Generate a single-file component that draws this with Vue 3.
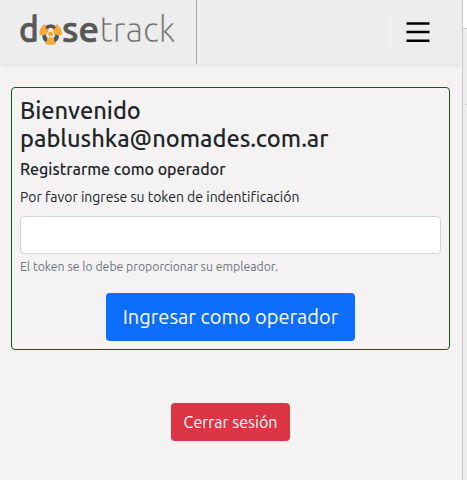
<script setup>
import { ref } from 'vue'

const token = ref('')
</script>

<template>
  <div class="screen">
    <div class="page">
      <header class="topbar">
        <div class="brand">
          <svg class="logo" width="176" height="64" viewBox="0 0 176 64" aria-label="dosetrack">
            <text class="logo-bold" x="-0.9" y="42.400" textLength="19.800" lengthAdjust="spacingAndGlyphs">d</text>
            <g transform="translate(30.600 33.600)">
              <ellipse rx="6.500" ry="7.600" fill="none" stroke="#575756" stroke-width="3.600" />
              <g fill="#f4a938">
                <path d="M-3.500 1-10.900 2A11 11 0 0 1-5.800-9.500L-1.500-3.500Z" />
                <path d="M3.500 1 10.900 2A11 11 0 0 0 5.800-9.500L1.500-3.500Z" />
                <path d="M-2.500 3-5.500 9.800A11.300 11.300 0 0 0 5.500 9.800L2.500 3Z" />
              </g>
              <path d="M-4.500-5.500Q0-8.500 4.500-5.500M-7.300 2.500Q-6.500 6-4 7.500M7.300 2.500Q6.500 6 4 7.500" fill="none" stroke="#575756" stroke-width="2.800" />
              <path d="M-1.500-5.500H1.500L2-3 4.300 1.500 3 4H-3L-4.300 1.500-2-3Z" fill="#eee" />
              <circle cy="0.300" r="2.500" fill="#f4a938" />
            </g>
            <text class="logo-bold" x="42" y="42.400" textLength="37" lengthAdjust="spacingAndGlyphs">se</text>
            <text class="logo-light" x="79.500" y="42.400" textLength="76" lengthAdjust="spacingAndGlyphs">track</text>
          </svg>
        </div>
        <button class="toggler" type="button" aria-label="Menú">
          <svg width="24" height="22" viewBox="0 0 24 22">
            <path d="M.5 2.500h23M.5 11.100h23M.5 19.700h23" stroke="#000" stroke-width="2.500" />
          </svg>
        </button>
      </header>
      <main>
        <form class="card" @submit.prevent>
          <h3>Bienvenido<br />pablushka@nomades.com.ar</h3>
          <h6>Registrarme como operador</h6>
          <label for="token">Por favor ingrese su token de indentificación</label>
          <input id="token" v-model="token" type="text" />
          <small>El token se lo debe proporcionar su empleador.</small>
          <button class="btn primary" type="submit">Ingresar como operador</button>
        </form>
        <button class="btn danger" type="button">Cerrar sesión</button>
      </main>
    </div>
    <aside class="edge">
      <div class="edge-top"></div>
      <div class="edge-mid"></div>
    </aside>
  </div>
</template>

<style>
body {
  background: #f4f2f3;
  overflow: hidden;
}
</style>

<style scoped>
* {
  box-sizing: border-box;
}
.screen {
  display: flex;
  height: 480px;
  font-family: Ubuntu, "Noto Sans", sans-serif;
  font-variant-ligatures: none;
  color: #212529;
}
.page {
  width: 462px;
  background: #f4f2f3;
}
.topbar {
  display: flex;
  justify-content: space-between;
  align-items: center;
  height: 64px;
  padding-right: 16px;
  background: #ededed;
  box-shadow: 0 2px 4px rgba(0, 0, 0, 0.07);
}
.brand {
  width: 197px;
  height: 64px;
  padding-left: 20px;
  border-right: 1px solid #aaa;
}
.logo {
  display: block;
}
.logo-bold {
  font: 500 35px Ubuntu, "Noto Sans", sans-serif;
  fill: #575756;
  stroke: #575756;
  stroke-width: 0.7px;
}
.logo-light {
  font: 300 35px Ubuntu, "Open Sans", sans-serif;
  fill: #686867;
  stroke: #ededed;
  stroke-width: 0.4px;
}
.toggler {
  display: flex;
  justify-content: center;
  align-items: center;
  width: 56px;
  height: 40px;
  padding: 0;
  border: 1px solid #efefef;
  border-radius: 4px;
  background: transparent;
}
main {
  display: flex;
  flex-direction: column;
  align-items: center;
  padding: 23px 12px 0 11px;
}
.card {
  display: flex;
  flex-direction: column;
  width: 439px;
  height: 263px;
  padding: 8px;
  border: 1px solid #0f5526;
  border-radius: 4px;
}
h3 {
  height: 56px;
  margin: 0 0 8px;
  font-size: 23.600px;
  font-weight: 500;
  line-height: 28.300px;
}
h6 {
  margin: 0 0 8px;
  font-size: 16px;
  font-weight: 500;
  line-height: 19px;
}
label {
  height: 21px;
  margin-bottom: 8px;
  font-size: 14px;
  line-height: 21px;
}
h3,
h6,
label,
small,
.btn {
  white-space: nowrap;
}
input {
  height: 38px;
  width: 421px;
  margin: 0;
  padding: 6px 12px;
  border: 1px solid #ced4da;
  border-radius: 4px;
  background: #fff;
  font: inherit;
}
small {
  height: 19px;
  margin-top: 4px;
  color: #6c757d;
  font-size: 12.250px;
  line-height: 18px;
}
.btn {
  padding: 0;
  border: 0;
  border-radius: 4px;
  color: #fff;
  font-family: inherit;
}
.primary {
  align-self: center;
  width: 249px;
  height: 48px;
  margin-top: 16px;
  padding-bottom: 2px;
  background: #0d6efd;
  font-size: 20px;
}
.danger {
  width: 119px;
  height: 38px;
  margin-top: 53px;
  background: #dc3545;
  font-size: 16px;
}
.edge {
  width: 5px;
  height: 480px;
  border-left: 1px solid #c5c9cd;
  background: #ededed;
}
.edge-top {
  height: 29px;
  border-bottom: 1px solid #c9cacc;
  background: #fff;
}
.edge-mid {
  height: 76px;
  margin-left: 2px;
  border-bottom: 1px solid #c9cacc;
}
</style>
